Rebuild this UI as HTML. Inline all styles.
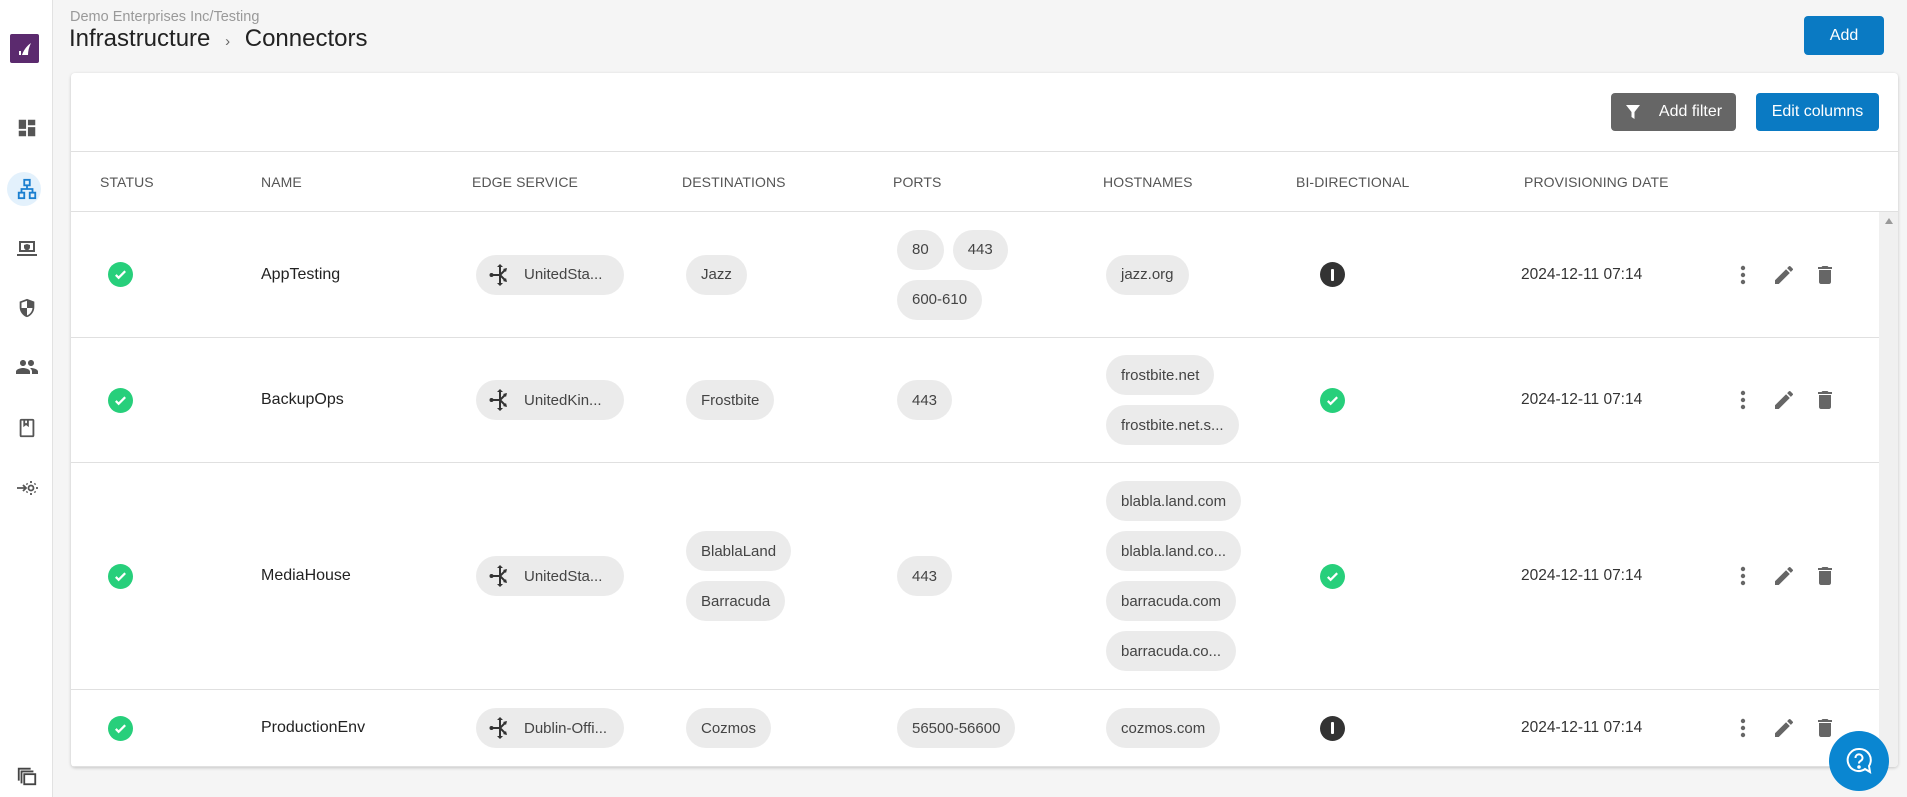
<!DOCTYPE html>
<html><head><meta charset="utf-8"><style>
*{box-sizing:border-box;margin:0;padding:0}
body{width:1907px;height:797px;overflow:hidden;background:#f5f5f5;font-family:"Liberation Sans",sans-serif;color:#222;position:relative}
.side{position:absolute;left:0;top:0;width:53px;height:797px;background:#fff;border-right:1px solid #e2e2e2}
.si{position:absolute;left:12px;width:30px;height:30px;display:flex;align-items:center;justify-content:center}
.card{position:absolute;left:71px;top:73px;width:1827px;height:694px;background:#fff;border-radius:4px;box-shadow:0 1px 3px rgba(0,0,0,.2);overflow:hidden}
.btn{position:absolute;color:#fff;font-size:16px;border-radius:4px;display:flex;align-items:center;justify-content:center}
.hd{position:absolute;top:78px;left:0;width:1827px;height:61px;border-top:1px solid #e0e0e0;border-bottom:1px solid #e0e0e0}
.hd span{position:absolute;top:22px;font-size:14px;color:#555;letter-spacing:.1px}
.row{position:absolute;left:0;width:1808px;border-bottom:1px solid #e0e0e0}
.c{position:absolute;top:0;height:100%;display:flex;flex-direction:column;justify-content:center;align-items:flex-start;gap:10px}
.chip{height:40px;border-radius:20px;background:#ebebeb;padding:0 15px;display:flex;align-items:center;font-size:15px;color:#444;white-space:nowrap}
.cr{display:flex;gap:9px}
.nm{font-size:16px;color:#222}
.dt{font-size:15.5px;color:#333}
.ok{width:25px;height:25px;border-radius:50%;background:#27cf7b;display:flex;align-items:center;justify-content:center}
.in{width:25px;height:25px;border-radius:50%;background:#333;display:flex;align-items:center;justify-content:center}
.in:after{content:"";width:3px;height:12px;background:#fff;border-radius:1px}
.acts{position:absolute;left:1668px;top:0;height:100%;display:flex;align-items:center}
</style></head><body>
<div class="side">
 <div style="position:absolute;left:10px;top:34px;width:29px;height:29px;background:#5b2a6e;border-radius:2px;display:flex;align-items:center;justify-content:center"><svg width="18" height="18" viewBox="0 0 18 18"><path d="M3 15 L3 11 L5 11 L5 15Z M6 15 C8 9 12 5 15 3 C13 7 12 11 12 15Z" fill="#fff"/></svg></div>
 <div class="si" style="top:113px"><svg width="22" height="22" viewBox="0 0 24 24" fill="#555"><path d="M3 13h8V3H3zm0 8h8v-6H3zm10 0h8V11h-8zm0-18v6h8V3z"/></svg></div>
 <div style="position:absolute;left:7px;top:172px;width:34px;height:34px;border-radius:50%;background:#e3f1fc"></div>
 <div class="si" style="top:174px"><svg width="22" height="22" viewBox="0 0 24 24" fill="none" stroke="#1a7fd0" stroke-width="2"><rect x="9" y="2" width="6" height="6"/><rect x="3" y="16" width="6" height="6"/><rect x="15" y="16" width="6" height="6"/><path d="M12 8v4M6 16v-4h12v4"/></svg></div>
 <div class="si" style="top:233px"><svg width="24" height="24" viewBox="0 0 24 24" fill="#555"><path d="M4 5h16v11H4zM6 7v7h12V7z M2 18h20v2H2z M12 8l3 1v2c0 2-1.5 3-3 3.5C10.5 14 9 13 9 11V9z"/></svg></div>
 <div class="si" style="top:293px"><svg width="22" height="22" viewBox="0 0 24 24" fill="#555"><path d="M12 2L4 5v6c0 5 3.5 9.5 8 11 4.5-1.5 8-6 8-11V5zm0 10H6V6.3l6-2.2zm0 0h6c-.5 4-3 7-6 8.2z"/></svg></div>
 <div class="si" style="top:352px"><svg width="24" height="24" viewBox="0 0 24 24" fill="#555"><path d="M16 11c1.7 0 3-1.3 3-3s-1.3-3-3-3-3 1.3-3 3 1.3 3 3 3zm-8 0c1.7 0 3-1.3 3-3S9.7 5 8 5 5 6.3 5 8s1.3 3 3 3zm0 2c-2.3 0-7 1.2-7 3.5V19h14v-2.5C15 14.2 10.3 13 8 13zm8 0c-.3 0-.6 0-1 .1 1.2.8 2 2 2 3.4V19h6v-2.5c0-2.3-4.7-3.5-7-3.5z"/></svg></div>
 <div class="si" style="top:413px"><svg width="22" height="22" viewBox="0 0 24 24" fill="none" stroke="#555" stroke-width="2"><rect x="5" y="3" width="14" height="18" rx="1"/><path d="M9 3v6l2-1.5 2 1.5V3"/></svg></div>
 <div class="si" style="top:473px"><svg width="24" height="24" viewBox="0 0 24 24" fill="none" stroke="#555" stroke-width="1.8"><path d="M2 12h9M8 9l3 3-3 3"/><circle cx="16" cy="12" r="2.5"/><path d="M16 5v2M16 17v2M21 12h2M12.5 8.5l-1-1M19.5 8.5l1-1M19.5 15.5l1 1M12.5 15.5l-1 1"/></svg></div>
 <div class="si" style="top:761px"><svg width="22" height="22" viewBox="0 0 24 24" fill="none" stroke="#444" stroke-width="2"><path d="M3 17V4h13"/><path d="M6 20V7h13"/><rect x="9" y="10" width="12" height="11"/></svg></div>
</div>
<div style="position:absolute;left:70px;top:9px;font-size:14.5px;color:#999">Demo Enterprises Inc/Testing</div>
<div style="position:absolute;left:69px;top:25px;font-size:24px;color:#222">Infrastructure <span style="font-size:15px;color:#666;margin:0 8px">›</span> Connectors</div>
<div class="btn" style="left:1804px;top:16px;width:80px;height:39px;background:#0a7ac3">Add</div>
<div class="card">
 <div class="btn" style="left:1540px;top:20px;width:125px;height:38px;background:#666"><svg width="16" height="16" viewBox="0 0 16 16" style="margin-right:18px"><path d="M1 1h14L9.5 8v7L6.5 13V8z" fill="#fff"/></svg>Add filter</div>
 <div class="btn" style="left:1685px;top:20px;width:123px;height:38px;background:#0a7ac3">Edit columns</div>
 <div class="hd"><span style="left:29px">STATUS</span><span style="left:190px">NAME</span><span style="left:401px">EDGE SERVICE</span><span style="left:611px">DESTINATIONS</span><span style="left:822px">PORTS</span><span style="left:1032px">HOSTNAMES</span><span style="left:1225px">BI-DIRECTIONAL</span><span style="left:1453px">PROVISIONING DATE</span></div>
 <div style="position:absolute;left:1808px;top:139px;width:19px;height:555px;background:#f0f0f0"><div style="margin:6px auto;width:0;height:0;border-left:4px solid transparent;border-right:4px solid transparent;border-bottom:6px solid #999"></div></div>
 <div id="rows"></div>
</div>
<div style="position:absolute;left:1829px;top:731px;width:60px;height:60px;border-radius:50%;background:#0a86d1;display:flex;align-items:center;justify-content:center"><svg width="30" height="30" viewBox="0 0 30 30" fill="none" stroke="#fff" stroke-width="2"><path d="M15 3a11 11 0 1 0 6 20l5 3-1-6A11 11 0 0 0 15 3z"/><path d="M11.5 12a3.5 3.5 0 1 1 5 3c-1 .5-1.5 1-1.5 2.5"/><circle cx="15" cy="21" r=".8" fill="#fff"/></svg></div>
<script>
const ok='<div class="ok"><svg width="15" height="15" viewBox="0 0 16 16"><path d="M3 8.5l3 3 7-7" stroke="#fff" stroke-width="2.4" fill="none"/></svg></div>';
const edge='<svg width="24" height="24" viewBox="0 0 24 24" fill="#333" style="margin-right:12px;flex-shrink:0"><path d="M3 12h9M12 12l6-6M12 12l6 6M12 4v16" stroke="#333" stroke-width="2" fill="none"/><circle cx="3.5" cy="12" r="2"/><path d="M12 1l3 3h-6zM12 23l3-3h-6zM19 5l-1 4-3-3zM19 19l-1-4-3 3z"/></svg>';
const acts='<div class="acts"><svg width="8" height="24" viewBox="0 0 8 24" fill="#666"><circle cx="4" cy="5" r="2.2"/><circle cx="4" cy="12" r="2.2"/><circle cx="4" cy="19" r="2.2"/></svg><svg style="margin-left:25px" width="24" height="24" viewBox="0 0 24 24" fill="#666"><path d="M3 17.25V21h3.75L17.8 9.94l-3.75-3.75zM20.7 7.04a1 1 0 0 0 0-1.41l-2.34-2.34a1 1 0 0 0-1.41 0l-1.83 1.83 3.75 3.75z"/></svg><svg style="margin-left:17px" width="24" height="24" viewBox="0 0 24 24" fill="#666"><path d="M6 19c0 1.1.9 2 2 2h8c1.1 0 2-.9 2-2V7H6zM19 4h-3.5l-1-1h-5l-1 1H5v2h14z"/></svg></div>';
const rows=[
 [139,126,'AppTesting','UnitedSta...',['Jazz'],[['80','443'],['600-610']],['jazz.org'],0],
 [265,125,'BackupOps','UnitedKin...',['Frostbite'],[['443']],['frostbite.net','frostbite.net.s...'],1],
 [390,227,'MediaHouse','UnitedSta...',['BlablaLand','Barracuda'],[['443']],['blabla.land.com','blabla.land.co...','barracuda.com','barracuda.co...'],1],
 [617,77,'ProductionEnv','Dublin-Offi...',['Cozmos'],[['56500-56600']],['cozmos.com'],0]];
let h='';
for(const r of rows){
 h+=`<div class="row" style="top:${r[0]}px;height:${r[1]}px">
 <div class="c" style="left:37px">${ok}</div>
 <div class="c" style="left:190px"><span class="nm">${r[2]}</span></div>
 <div class="c" style="left:405px"><div class="chip" style="width:148px;padding-left:12px">${edge}${r[3]}</div></div>
 <div class="c" style="left:615px">${r[4].map(x=>`<div class="chip">${x}</div>`).join('')}</div>
 <div class="c" style="left:826px">${r[5].map(l=>`<div class="cr">${l.map(x=>`<div class="chip">${x}</div>`).join('')}</div>`).join('')}</div>
 <div class="c" style="left:1035px">${r[6].map(x=>`<div class="chip">${x}</div>`).join('')}</div>
 <div class="c" style="left:1249px">${r[7]?ok:'<div class="in"></div>'}</div>
 <div class="c" style="left:1450px"><span class="dt">2024-12-11 07:14</span></div>
 ${acts}</div>`;
}
document.getElementById('rows').innerHTML=h;
</script>
</body></html>
